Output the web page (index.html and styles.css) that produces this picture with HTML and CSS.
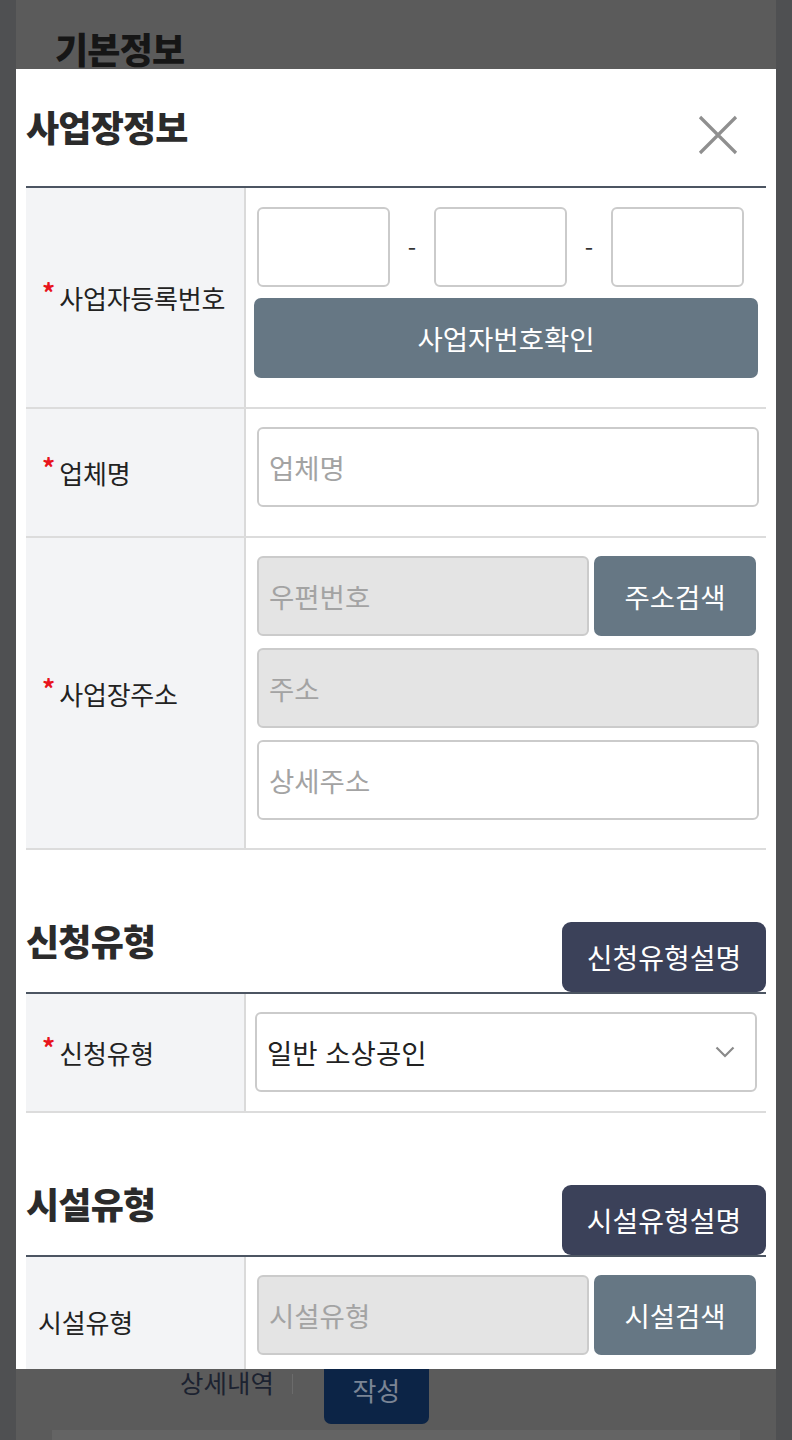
FILE: index.html
```html
<!DOCTYPE html>
<html lang="ko">
<head>
<meta charset="utf-8">
<title>사업장정보</title>
<link rel="stylesheet" href="styles.css">
</head>
<body>
<div class="page">
  <h2 class="page-title">기본정보</h2>
  <div class="page-spacer"></div>
  <div class="page-tabs">
    <span class="tab-label">상세내역</span>
    <span class="tab-sep"></span>
    <span class="tab-btn">작성</span>
  </div>
  <div class="page-strip"></div>
</div>

<div class="modal">
  <div class="modal-head">
    <h1 class="modal-title">사업장정보</h1>
    <span class="close">
      <svg width="40" height="40" viewBox="0 0 40 40"><path d="M2 2 L38 38 M38 2 L2 38" stroke="#8f8f8f" stroke-width="3.2" fill="none"/></svg>
    </span>
  </div>

  <div class="table">
    <div class="row">
      <div class="label"><span class="req">*</span>사업자등록번호</div>
      <div class="field f-biz">
        <div class="biz-inputs">
          <div class="input box3"></div>
          <span class="dash">-</span>
          <div class="input box3"></div>
          <span class="dash">-</span>
          <div class="input box3"></div>
        </div>
        <div class="btn btn-slate btn-wide">사업자번호확인</div>
      </div>
    </div>
    <div class="row">
      <div class="label"><span class="req">*</span>업체명</div>
      <div class="field">
        <div class="input ph">업체명</div>
      </div>
    </div>
    <div class="row">
      <div class="label"><span class="req">*</span>사업장주소</div>
      <div class="field stack">
        <div class="inline">
          <div class="input ph disabled grow">우편번호</div>
          <div class="btn btn-slate btn-side">주소검색</div>
        </div>
        <div class="input ph disabled">주소</div>
        <div class="input ph">상세주소</div>
      </div>
    </div>
  </div>

  <div class="section-head">
    <h1 class="modal-title">신청유형</h1>
    <div class="btn btn-navy">신청유형설명</div>
  </div>
  <div class="table">
    <div class="row">
      <div class="label"><span class="req">*</span>신청유형</div>
      <div class="field f-select">
        <div class="input select">
          <span>일반 소상공인</span>
          <svg width="20" height="12" viewBox="0 0 20 12"><path d="M1.5 1.5 L10 10 L18.5 1.5" stroke="#8a8a8a" stroke-width="2.2" fill="none"/></svg>
        </div>
      </div>
    </div>
  </div>

  <div class="section-head">
    <h1 class="modal-title">시설유형</h1>
    <div class="btn btn-navy">시설유형설명</div>
  </div>
  <div class="table">
    <div class="row">
      <div class="label plain">시설유형</div>
      <div class="field">
        <div class="inline">
          <div class="input ph disabled grow">시설유형</div>
          <div class="btn btn-slate btn-side">시설검색</div>
        </div>
      </div>
    </div>
  </div>
</div>
</body>
</html>
```

FILE: styles.css
```css
* { box-sizing: border-box; }
html, body {
  margin: 0;
  padding: 0;
}
body {
  background: #4f5052;
  font-family: "Noto Sans CJK KR", "Noto Sans", sans-serif;
  width: 792px;
  height: 1440px;
  overflow: hidden;
}
.page {
  margin: 0 16px;
  background: #5b5b5b;
  height: 1440px;
  overflow: hidden;
}
.page-title {
  margin: 0;
  padding: 24px 0 0 39px;
  font-size: 36px;
  letter-spacing: -0.8px;
  line-height: 48px;
  font-weight: 900;
  color: #161616;
}
.page-spacer { height: 1272px; }
.page-tabs {
  display: flex;
  align-items: flex-end;
  height: 80px;
}
.tab-label {
  margin-left: 164px;
  font-size: 25.5px;
  color: #1c2230;
  line-height: 30px;
  margin-bottom: 27px;
}
.tab-sep {
  width: 1px;
  height: 20px;
  background: #6b6b6b;
  margin: 0 31px 30px 18px;
}
.tab-btn {
  width: 105px;
  height: 80px;
  background: #0c2446;
  border-radius: 0 0 7px 7px;
  color: #7b8595;
  font-size: 26px;
  display: flex;
  align-items: flex-end;
  justify-content: center;
  padding-bottom: 16px;
}
.page-strip {
  margin: 6px 36px 0 36px;
  height: 20px;
  background: #646464;
}

.modal {
  position: fixed;
  left: 16px;
  top: 69px;
  width: 760px;
  height: 1300px;
  background: #fff;
  overflow: hidden;
  padding: 0 10px;
}
.modal-head {
  height: 117px;
  display: flex;
  align-items: center;
  justify-content: space-between;
}
.modal-title {
  margin: 0;
  font-size: 36px;
  letter-spacing: -0.8px;
  font-weight: 900;
  color: #2b2b2b;
  line-height: 40px;
}
.modal-head .modal-title { margin-top: -4px; }
.close {
  display: block;
  width: 40px;
  height: 40px;
  margin: 15px 28px 0 0;
}
.table {
  border-top: 2px solid #4c5562;
}
.row {
  display: flex;
  border-bottom: 2px solid #dcdcdc;
}
.label {
  width: 220px;
  flex: none;
  background: #f3f4f6;
  border-right: 2px solid #dadada;
  display: flex;
  align-items: center;
  padding-left: 16px;
  font-size: 26px;
  letter-spacing: -0.2px;
  color: #222;
}
.label.plain { padding-left: 12px; padding-top: 2px; }
.req {
  color: #e8141c;
  font-size: 26px;
  font-weight: 700;
  align-self: center;
  margin-right: 4px;
  margin-top: -12px;
  letter-spacing: 0;
}
.field {
  flex: 1;
  padding: 18px 7px 29px 11px;
}
.field.stack {
  display: flex;
  flex-direction: column;
  gap: 12px;
  padding-bottom: 28px;
}
.f-biz {
  padding: 19px 8px 29px 8px;
}
.f-select {
  padding: 18px 9px 19px 9px;
}
.biz-inputs {
  display: flex;
  align-items: center;
  margin-left: 3px;
  margin-bottom: 11px;
}
.input {
  height: 80px;
  border: 2px solid #cbcbcb;
  border-radius: 6px;
  background: #fff;
  display: flex;
  align-items: center;
  padding-left: 10px;
  font-size: 27.5px;
}
.box3 { width: 133px; }
.dash {
  width: 44px;
  text-align: center;
  font-size: 24px;
  color: #333;
}
.ph { color: #a3a3a3; }
.disabled { background: #e4e4e4; }
.inline {
  display: flex;
  gap: 5px;
  margin-right: 3px;
}
.grow { flex: 1; }
.btn {
  display: flex;
  align-items: center;
  justify-content: center;
  color: #fff;
  font-size: 27.5px;
  border-radius: 7px;
}
.btn-slate { background: #667784; }
.btn-wide { height: 80px; }
.btn-side { width: 162px; height: 80px; flex: none; }
.btn-navy {
  background: #3b4159;
  width: 204px;
  height: 70px;
  margin-top: 2px;
  border-radius: 9px;
  font-size: 28px;
}
.section-head {
  display: flex;
  justify-content: space-between;
  align-items: flex-start;
  margin-top: 70px;
}
.select {
  justify-content: space-between;
  padding-right: 20px;
  color: #222;
}
```
